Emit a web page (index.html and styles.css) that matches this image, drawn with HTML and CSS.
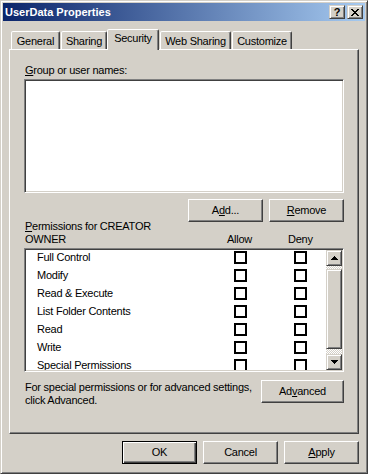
FILE: index.html
```html
<!DOCTYPE html>
<html lang="en">
<head>
    <meta charset="UTF-8">
    <title>UserData Properties</title>
    <link rel="stylesheet" href="styles.css">
</head>
<body>

    <div class="window">
        <!-- Barre de titre -->
        <div class="titlebar">
            <span class="title">UserData Properties</span>
            <div class="caption-btns">
                <span class="cap-btn help">?</span>
                <span class="cap-btn close">
                    <svg width="8" height="7" viewBox="0 0 8 7" shape-rendering="crispEdges">
                        <path d="M0 0h2v1h-2zM6 0h2v1h-2zM1 1h2v1h-2zM5 1h2v1h-2zM2 2h4v1h-4zM3 3h2v1h-2zM2 4h4v1h-4zM1 5h2v1h-2zM5 5h2v1h-2zM0 6h2v1h-2zM6 6h2v1h-2z" fill="#000"/>
                    </svg>
                </span>
            </div>
        </div>

        <div class="body">
            <!-- Onglets -->
            <div class="tabs">
                <div class="tab tab-general">General</div>
                <div class="tab tab-sharing">Sharing</div>
                <div class="tab tab-security active">Security</div>
                <div class="tab tab-web">Web Sharing</div>
                <div class="tab tab-custom">Customize</div>
            </div>

            <div class="panel">
                <div class="label"><u>G</u>roup or user names:</div>
                <div class="sunken names"></div>

                <div class="btn-row">
                    <button class="btn">A<u>d</u>d...</button>
                    <button class="btn"><u>R</u>emove</button>
                </div>

                <div class="perm-head">
                    <div class="perm-label"><u>P</u>ermissions for CREATOR<br>OWNER</div>
                    <div class="col-head">Allow</div>
                    <div class="col-head">Deny</div>
                </div>

                <div class="sunken perms">
                    <div class="perm-rows">
                        <div class="perm-row"><span>Full Control</span><span class="check"></span><span></span><span class="check"></span></div>
                        <div class="perm-row"><span>Modify</span><span class="check"></span><span></span><span class="check"></span></div>
                        <div class="perm-row"><span>Read &amp; Execute</span><span class="check"></span><span></span><span class="check"></span></div>
                        <div class="perm-row"><span>List Folder Contents</span><span class="check"></span><span></span><span class="check"></span></div>
                        <div class="perm-row"><span>Read</span><span class="check"></span><span></span><span class="check"></span></div>
                        <div class="perm-row"><span>Write</span><span class="check"></span><span></span><span class="check"></span></div>
                        <div class="perm-row"><span>Special Permissions</span><span class="check"></span><span></span><span class="check"></span></div>
                    </div>
                    <div class="scrollbar">
                        <div class="sb-btn">
                            <svg width="7" height="4" viewBox="0 0 7 4" shape-rendering="crispEdges"><path d="M3 0h1v1h-1zM2 1h3v1h-3zM1 2h5v1h-5zM0 3h7v1h-7z" fill="#000"/></svg>
                        </div>
                        <div class="sb-track"><div class="sb-thumb"></div></div>
                        <div class="sb-btn">
                            <svg width="7" height="4" viewBox="0 0 7 4" shape-rendering="crispEdges"><path d="M0 0h7v1h-7zM1 1h5v1h-5zM2 2h3v1h-3zM3 3h1v1h-1z" fill="#000"/></svg>
                        </div>
                    </div>
                </div>

                <div class="adv-row">
                    <p>For special permissions or for advanced settings, click Advanced.</p>
                    <button class="btn btn-adv">Ad<u>v</u>anced</button>
                </div>
            </div>

            <!-- Boutons du dialogue -->
            <div class="dlg-btns">
                <button class="btn default">OK</button>
                <button class="btn">Cancel</button>
                <button class="btn"><u>A</u>pply</button>
            </div>
        </div>
    </div>

</body>
</html>
```

FILE: styles.css
```css
body {
    margin: 0;
    font-family: "Liberation Sans", Arial, sans-serif;
    font-size: 11px;
    line-height: 13px;
    color: #000;
    background: #d4d0c8;
}
u {
    text-underline-offset: 1px;
}
.window {
    width: 368px;
    height: 474px;
    box-sizing: border-box;
    padding: 2px;
    background: #d4d0c8;
    border: 1px solid;
    border-color: #d4d0c8 #404040 #404040 #d4d0c8;
    box-shadow: inset 1px 1px #fff, inset -1px -1px #808080;
}
.titlebar {
    height: 18px;
    display: flex;
    align-items: center;
    justify-content: space-between;
    background: linear-gradient(to right, #0a246a, #a6caf0);
}
.title {
    padding-left: 2px;
    color: #fff;
    font-weight: bold;
}
.caption-btns {
    display: flex;
    gap: 2px;
    margin-right: 2px;
}
.cap-btn, .sb-btn, .sb-thumb {
    box-sizing: border-box;
    background: #d4d0c8;
    border: 1px solid;
    border-color: #d4d0c8 #404040 #404040 #d4d0c8;
    box-shadow: inset 1px 1px #fff, inset -1px -1px #808080;
}
.cap-btn {
    width: 16px;
    height: 14px;
    display: flex;
    align-items: center;
    justify-content: center;
}
.help {
    font-weight: bold;
    font-size: 11px;
    line-height: 11px;
}
.body {
    padding: 0 6px;
}
.tabs {
    display: flex;
    align-items: flex-end;
    gap: 1px;
    height: 20px;
    margin-top: 8px;
    padding-left: 2px;
    position: relative;
    z-index: 1;
}
.tab {
    height: 18px;
    box-sizing: border-box;
    padding-top: 3px;
    text-align: center;
    letter-spacing: -0.25px;
    border: 1px solid;
    border-bottom: none;
    border-color: #fff #404040 transparent #fff;
    border-radius: 2px 2px 0 0;
    box-shadow: inset -1px 0 #808080;
    background: #d4d0c8;
}
.tab.active {
    height: 21px;
    margin-bottom: -1px;
    margin-left: -1px;
    padding-top: 2px;
}
.tab-general { width: 49px; }
.tab-sharing { width: 46px; }
.tab-security { width: 52px; }
.tab-web { width: 71px; }
.tab-custom { width: 60px; }

.panel {
    height: 385px;
    box-sizing: border-box;
    padding: 14px 14px 0;
    border: 1px solid;
    border-color: #fff #404040 #404040 #fff;
    box-shadow: inset -1px -1px #808080;
    letter-spacing: -0.25px;
}
.label {
    padding-left: 1px;
    margin-bottom: 2px;
}
.sunken {
    box-sizing: border-box;
    background: #fff;
    padding: 1px;
    border: 1px solid;
    border-color: #808080 #fff #fff #808080;
    box-shadow: inset 1px 1px #404040, inset -1px -1px #d4d0c8;
}
.names {
    height: 114px;
}
.btn-row {
    display: flex;
    justify-content: flex-end;
    gap: 6px;
    margin-top: 6px;
}
.btn {
    width: 75px;
    height: 23px;
    padding: 0;
    box-sizing: border-box;
    font: inherit;
    letter-spacing: -0.25px;
    color: #000;
    background: #d4d0c8;
    border: 1px solid;
    border-color: #fff #404040 #404040 #fff;
    box-shadow: inset -1px -1px #808080;
}
.btn.default {
    border-color: #000;
    box-shadow: inset 1px 1px #fff, inset -1px -1px #404040, inset -2px -2px #808080;
}
.perm-head {
    display: grid;
    grid-template-columns: 203px 61px auto;
    align-items: end;
    margin-top: -2px;
}
.perm-label {
    padding-left: 1px;
}
.perms {
    height: 124px;
    margin-top: 2px;
    display: flex;
    overflow: hidden;
}
.perm-rows {
    flex: 1;
    overflow: hidden;
}
.perm-row {
    display: grid;
    grid-template-columns: 197px 13px 47px 13px;
    align-items: start;
    height: 18px;
    box-sizing: border-box;
    padding: 1px 0 0 11px;
}
.check {
    width: 13px;
    height: 13px;
    box-sizing: border-box;
    border: 2px solid #000;
    background: #fff;
}
.scrollbar {
    width: 16px;
    display: flex;
    flex-direction: column;
}
.sb-btn {
    height: 16px;
    display: flex;
    align-items: center;
    justify-content: center;
}
.sb-track {
    flex: 1;
    background-color: #fff;
    background-image: repeating-conic-gradient(#d4d0c8 0 25%, #fff 0 50%);
    background-size: 2px 2px;
}
.sb-thumb {
    height: 80px;
    margin-top: 3px;
}
.adv-row {
    display: flex;
    justify-content: space-between;
    align-items: flex-start;
    margin-top: 8px;
}
.adv-row p {
    margin: 0;
    width: 232px;
    padding: 1px 0 0 1px;
}
.btn-adv {
    width: 83px;
}
.dlg-btns {
    display: flex;
    justify-content: flex-end;
    gap: 6px;
    margin-top: 7px;
}
```
